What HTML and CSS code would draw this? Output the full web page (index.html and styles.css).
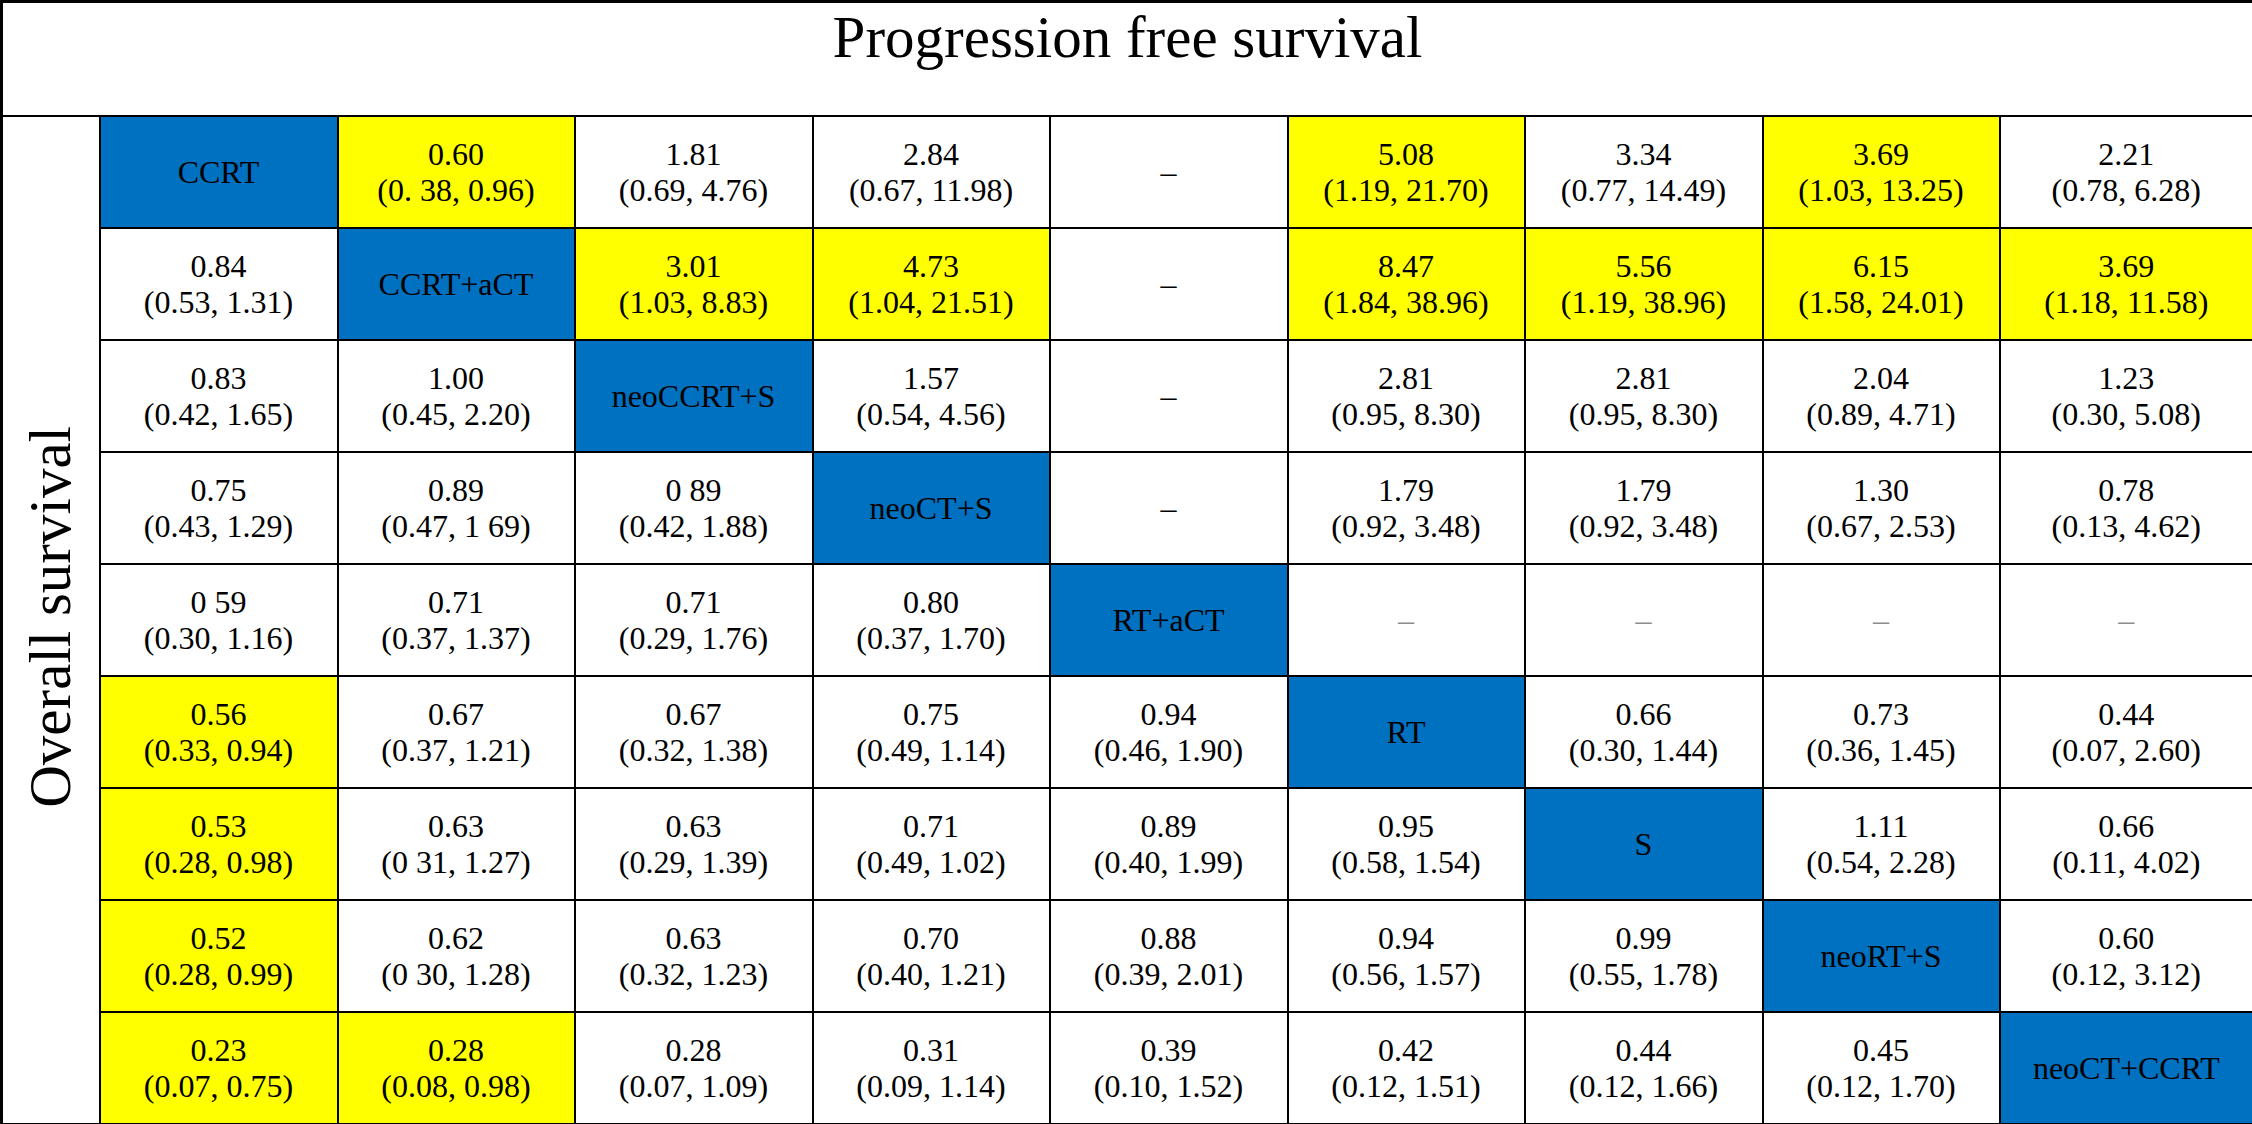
FILE: index.html
```html
<!DOCTYPE html>
<html>
<head>
<meta charset="utf-8">
<link rel="stylesheet" href="styles.css">
</head>
<body>
<table class="matrix">
  <colgroup>
    <col class="c-label">
    <col class="c-a"><col class="c-b"><col class="c-a"><col class="c-b">
    <col class="c-a"><col class="c-b"><col class="c-a"><col class="c-b">
    <col class="c-last">
  </colgroup>
  <tr class="title-row"><td class="title" colspan="10">Progression free survival</td></tr>
  <tr>
    <td class="side" rowspan="9"><span class="side-text">Overall survival</span></td>
    <td class="tx">CCRT</td>
    <td class="hi">0.60<br>(0. 38, 0.96)</td>
    <td>1.81<br>(0.69, 4.76)</td>
    <td>2.84<br>(0.67, 11.98)</td>
    <td class="na">–</td>
    <td class="hi">5.08<br>(1.19, 21.70)</td>
    <td>3.34<br>(0.77, 14.49)</td>
    <td class="hi">3.69<br>(1.03, 13.25)</td>
    <td>2.21<br>(0.78, 6.28)</td>
  </tr>
  <tr>
    <td>0.84<br>(0.53, 1.31)</td>
    <td class="tx">CCRT+aCT</td>
    <td class="hi">3.01<br>(1.03, 8.83)</td>
    <td class="hi">4.73<br>(1.04, 21.51)</td>
    <td class="na">–</td>
    <td class="hi">8.47<br>(1.84, 38.96)</td>
    <td class="hi">5.56<br>(1.19, 38.96)</td>
    <td class="hi">6.15<br>(1.58, 24.01)</td>
    <td class="hi">3.69<br>(1.18, 11.58)</td>
  </tr>
  <tr>
    <td>0.83<br>(0.42, 1.65)</td>
    <td>1.00<br>(0.45, 2.20)</td>
    <td class="tx">neoCCRT+S</td>
    <td>1.57<br>(0.54, 4.56)</td>
    <td class="na">–</td>
    <td>2.81<br>(0.95, 8.30)</td>
    <td>2.81<br>(0.95, 8.30)</td>
    <td>2.04<br>(0.89, 4.71)</td>
    <td>1.23<br>(0.30, 5.08)</td>
  </tr>
  <tr>
    <td>0.75<br>(0.43, 1.29)</td>
    <td>0.89<br>(0.47, 1 69)</td>
    <td>0 89<br>(0.42, 1.88)</td>
    <td class="tx">neoCT+S</td>
    <td class="na">–</td>
    <td>1.79<br>(0.92, 3.48)</td>
    <td>1.79<br>(0.92, 3.48)</td>
    <td>1.30<br>(0.67, 2.53)</td>
    <td>0.78<br>(0.13, 4.62)</td>
  </tr>
  <tr>
    <td>0 59<br>(0.30, 1.16)</td>
    <td>0.71<br>(0.37, 1.37)</td>
    <td>0.71<br>(0.29, 1.76)</td>
    <td>0.80<br>(0.37, 1.70)</td>
    <td class="tx">RT+aCT</td>
    <td class="na grey">–</td>
    <td class="na grey">–</td>
    <td class="na grey">–</td>
    <td class="na grey">–</td>
  </tr>
  <tr>
    <td class="hi">0.56<br>(0.33, 0.94)</td>
    <td>0.67<br>(0.37, 1.21)</td>
    <td>0.67<br>(0.32, 1.38)</td>
    <td>0.75<br>(0.49, 1.14)</td>
    <td>0.94<br>(0.46, 1.90)</td>
    <td class="tx">RT</td>
    <td>0.66<br>(0.30, 1.44)</td>
    <td>0.73<br>(0.36, 1.45)</td>
    <td>0.44<br>(0.07, 2.60)</td>
  </tr>
  <tr>
    <td class="hi">0.53<br>(0.28, 0.98)</td>
    <td>0.63<br>(0 31, 1.27)</td>
    <td>0.63<br>(0.29, 1.39)</td>
    <td>0.71<br>(0.49, 1.02)</td>
    <td>0.89<br>(0.40, 1.99)</td>
    <td>0.95<br>(0.58, 1.54)</td>
    <td class="tx">S</td>
    <td>1.11<br>(0.54, 2.28)</td>
    <td>0.66<br>(0.11, 4.02)</td>
  </tr>
  <tr>
    <td class="hi">0.52<br>(0.28, 0.99)</td>
    <td>0.62<br>(0 30, 1.28)</td>
    <td>0.63<br>(0.32, 1.23)</td>
    <td>0.70<br>(0.40, 1.21)</td>
    <td>0.88<br>(0.39, 2.01)</td>
    <td>0.94<br>(0.56, 1.57)</td>
    <td>0.99<br>(0.55, 1.78)</td>
    <td class="tx">neoRT+S</td>
    <td>0.60<br>(0.12, 3.12)</td>
  </tr>
  <tr>
    <td class="hi">0.23<br>(0.07, 0.75)</td>
    <td class="hi">0.28<br>(0.08, 0.98)</td>
    <td>0.28<br>(0.07, 1.09)</td>
    <td>0.31<br>(0.09, 1.14)</td>
    <td>0.39<br>(0.10, 1.52)</td>
    <td>0.42<br>(0.12, 1.51)</td>
    <td>0.44<br>(0.12, 1.66)</td>
    <td>0.45<br>(0.12, 1.70)</td>
    <td class="tx">neoCT+CCRT</td>
  </tr>
</table>
</body>
</html>
```
FILE: styles.css
```css
html, body {
  margin: 0;
  padding: 0;
  background: #ffffff;
}

.matrix {
  width: 2252px;
  height: 1124px;
  table-layout: fixed;
  border-collapse: collapse;
  font-family: "Liberation Serif", "Times New Roman", serif;
  color: #000000;
}

.c-label { width: 98px; }
.c-a { width: 238px; }
.c-b { width: 237px; }
.c-last { width: 254px; }

.matrix td {
  border: 2px solid #000000;
  padding: 0;
  text-align: center;
  vertical-align: middle;
  font-size: 32px;
  line-height: 36px;
  height: 110px;
  background: #ffffff;
}

.matrix tr.title-row td.title {
  height: 107px;
  font-size: 59px;
  line-height: 59px;
  vertical-align: top;
  padding-top: 5px;
  border-width: 3px 3px 2px 3px;
}

.matrix td.side {
  border-left-width: 3px;
  border-bottom-width: 3px;
  height: auto;
}

.side-text {
  display: inline-block;
  writing-mode: vertical-rl;
  transform: rotate(180deg);
  font-size: 59px;
  line-height: 59px;
  white-space: nowrap;
}

.matrix td.hi { background: #ffff00; }
.matrix td.tx { background: #0070c0; }
.matrix td.na { font-size: 32px; }
.matrix td.grey { color: #8c8c8c; }

.matrix tr:last-child td { border-bottom-width: 3px; }
.matrix tr td:last-child { border-right-width: 3px; }
```
